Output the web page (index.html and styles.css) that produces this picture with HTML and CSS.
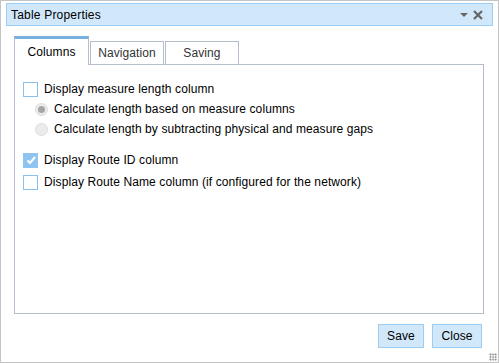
FILE: index.html
```html
<!DOCTYPE html>
<html>
<head>
<meta charset="utf-8">
<link rel="stylesheet" href="styles.css">
</head>
<body>
<div class="dialog">
  <div class="titlebar">
    <span class="title">Table Properties</span>
    <span class="tools">
      <svg class="caret" width="8" height="5" viewBox="0 0 8 5"><path d="M0 0h8L4 4z" fill="#666"/></svg>
      <svg class="close" width="10" height="10" viewBox="0 0 10 10"><path d="M1 1L9 9M9 1L1 9" stroke="#666" stroke-width="2.2"/></svg>
    </span>
  </div>
  <div class="tabs">
    <div class="tab active">Columns</div>
    <div class="tab t-nav">Navigation</div>
    <div class="tab t-save">Saving</div>
  </div>
  <div class="panel">
    <label class="row chk-row"><span class="chk"></span>Display measure length column</label>
    <label class="row radio-row"><span class="radio on"></span>Calculate length based on measure columns</label>
    <label class="row radio-row"><span class="radio"></span>Calculate length by subtracting physical and measure gaps</label>
    <label class="row chk-row gap"><span class="chk checked"><svg width="12" height="12" viewBox="0 0 12 12"><path d="M2.5 6.5L5 9L10 3" fill="none" stroke="#fff" stroke-width="2"/></svg></span>Display Route ID column</label>
    <label class="row chk-row"><span class="chk"></span>Display Route Name column (if configured for the network)</label>
  </div>
  <div class="footer">
    <button class="btn b-save">Save</button>
    <button class="btn b-close">Close</button>
  </div>
  <div class="grip"></div>
</div>
</body>
</html>
```
FILE: styles.css
```css
* { box-sizing: border-box; }
html, body { margin: 0; padding: 0; background: #fff; }
body { font-family: "Liberation Sans", Arial, sans-serif; font-size: 12px; color: #000; letter-spacing: 0.1px; }
.dialog {
  position: relative;
  width: 499px; height: 363px;
  border: 1px solid #c4c4c4;
  padding: 2px 5px 0 5px;
  display: flex; flex-direction: column;
}
.titlebar {
  height: 23px;
  background: #d1e7fa;
  border: 1px solid #9dcdf2;
  display: flex; align-items: center; justify-content: space-between;
  padding: 0 4px;
}
.title { font-size: 12px; color: #000; padding-top: 1px; letter-spacing: 0.2px; }
.tools { display: flex; align-items: center; gap: 5px; padding-right: 5px; }
.caret { margin-top: 2px; }
.tabs {
  display: flex; align-items: flex-end;
  margin: 9px 0 0 8px;
  height: 29px;
}
.tab {
  height: 23px;
  border: 1px solid #b5bccc;
  border-bottom: none;
  color: #333;
  display: flex; align-items: center; justify-content: center;
  margin-right: 1px;
}
.tab.active {
  width: 75px; height: 29px;
  border-top: 3px solid #78b0e2;
  color: #000;
  background: #fff;
  position: relative; top: 1px;
}
.t-nav { width: 74px; }
.t-save { width: 74px; }
.panel {
  margin: 0 9px 0 8px;
  height: 250px;
  border: 1px solid #b5bccc;
  padding: 14px 0 0 8px;
}
.row { display: flex; align-items: center; height: 20px; color: #000; }
.chk {
  width: 15px; height: 15px;
  border: 1px solid #8cc0ea;
  background: #fff;
  margin-right: 6px;
  display: flex; align-items: center; justify-content: center;
}
.chk.checked { background: #8ec4f0; border-color: #8ec4f0; }
.radio-row { padding-left: 12px; }
.radio {
  width: 13px; height: 13px;
  border-radius: 50%;
  border: 1px solid #dcdcdc;
  background: #ececec;
  margin-right: 6px;
  display: flex; align-items: center; justify-content: center;
}
.radio.on::after {
  content: ""; width: 7px; height: 7px; border-radius: 50%; background: #a6a6a6;
}
.gap { margin-top: 11px; margin-bottom: 2px; }
.footer {
  display: flex; justify-content: flex-end; gap: 8px;
  margin: 10px 11px 0 0;
}
.btn {
  font-family: "Liberation Sans", Arial, sans-serif; font-size: 12px;
  letter-spacing: 0.1px;
  height: 24px;
  background: #d1e7fa;
  border: 1px solid #9dcdf2;
  color: #000;
  padding: 0;
}
.b-save { width: 46px; }
.b-close { width: 50px; }
.grip {
  position: absolute; right: 1px; bottom: 1px;
  width: 8px; height: 8px;
  background-image: radial-gradient(circle, #777 0.8px, transparent 1px);
  background-size: 2.7px 2.7px;
}
```
